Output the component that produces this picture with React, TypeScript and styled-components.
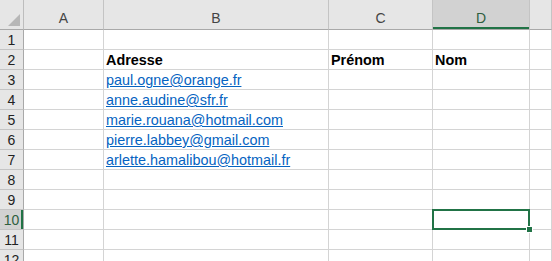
import React from 'react'
import styled, { createGlobalStyle } from 'styled-components'

const GlobalStyle = createGlobalStyle`
  html, body { margin: 0; padding: 0; background: #fff; overflow: hidden; }
  body { font-family: "Liberation Sans", Arial, sans-serif; }
`

const Sheet = styled.div`
  display: grid;
  grid-template-columns: 24px 80px 225px 104px 97px 1fr;
  grid-template-rows: 30px repeat(12, 20px);
  width: 552px;
  height: 261px;
  overflow: hidden;
`

const Corner = styled.div`
  position: relative;
  background: #e6e6e6;
  border-right: 1px solid #bdbdbd;
  border-bottom: 1px solid #a9a9a9;
  box-sizing: border-box;
  &::after {
    content: '';
    position: absolute;
    right: 3px;
    bottom: 3px;
    width: 0;
    height: 0;
    border-left: 12px solid transparent;
    border-bottom: 12px solid #b7b7b7;
  }
`

const ColHead = styled.div<{ $active?: boolean }>`
  display: flex;
  align-items: center;
  justify-content: center;
  padding-top: 6px;
  box-sizing: border-box;
  background: ${p => (p.$active ? '#d2d2d2' : '#e6e6e6')};
  border-right: 1px solid #c4c4c4;
  border-bottom: 1px solid #a9a9a9;
  box-shadow: ${p => (p.$active ? 'inset 0 -2px 0 #217346' : 'none')};
  color: ${p => (p.$active ? '#2f5f3f' : '#444')};
  font-size: 14px;
`

const RowHead = styled.div<{ $active?: boolean }>`
  display: flex;
  align-items: center;
  justify-content: center;
  box-sizing: border-box;
  background: ${p => (p.$active ? '#d2d2d2' : '#e6e6e6')};
  border-right: 1px solid #a9a9a9;
  border-bottom: 1px solid #c4c4c4;
  box-shadow: ${p => (p.$active ? 'inset -2px 0 0 #217346' : 'none')};
  color: ${p => (p.$active ? '#2f5f3f' : '#222')};
  font-size: 14px;
`

const Cell = styled.div<{ $bold?: boolean; $selected?: boolean }>`
  position: relative;
  display: flex;
  align-items: flex-end;
  padding: 0 0 1px 2px;
  box-sizing: border-box;
  border-right: 1px solid #d4d4d4;
  border-bottom: 1px solid #d4d4d4;
  font-size: 14.4px;
  font-weight: ${p => (p.$bold ? 700 : 400)};
  color: #000;
  white-space: nowrap;
  ${p =>
    p.$selected &&
    `
    &::before {
      content: '';
      position: absolute;
      top: -1px; left: -1px; right: -1px; bottom: -1px;
      border: 2px solid #217346;
      z-index: 1;
    }
    &::after {
      content: '';
      position: absolute;
      right: -4px; bottom: -4px;
      width: 5px; height: 5px;
      background: #217346;
      border: 1px solid #fff;
      z-index: 2;
    }
  `}
`

const Link = styled.a`
  color: #0563c1;
  text-decoration: underline;
  text-underline-offset: 1px;
`

const cols = ['A', 'B', 'C', 'D', 'E']

const data: Record<number, (string | null)[]> = {
  2: [null, 'Adresse', 'Prénom', 'Nom', null],
}

const emails = [
  'paul.ogne@orange.fr',
  'anne.audine@sfr.fr',
  'marie.rouana@hotmail.com',
  'pierre.labbey@gmail.com',
  'arlette.hamalibou@hotmail.fr',
]

export default function App() {
  const rows = Array.from({ length: 12 }, (_, i) => i + 1)
  return (
    <>
      <GlobalStyle />
      <Sheet>
        <Corner />
        {cols.map(c => (
          <ColHead key={c} $active={c === 'D'}>
            {c === 'E' ? '' : c}
          </ColHead>
        ))}
        {rows.map(r => (
          <React.Fragment key={r}>
            <RowHead $active={r === 10}>{r}</RowHead>
            {cols.map((c, ci) => {
              const email = c === 'B' && r >= 3 && r <= 7 ? emails[r - 3] : null
              const text = data[r]?.[ci] ?? null
              return (
                <Cell key={c} $bold={r === 2} $selected={r === 10 && c === 'D'}>
                  {email ? <Link>{email}</Link> : text}
                </Cell>
              )
            })}
          </React.Fragment>
        ))}
      </Sheet>
    </>
  )
}
